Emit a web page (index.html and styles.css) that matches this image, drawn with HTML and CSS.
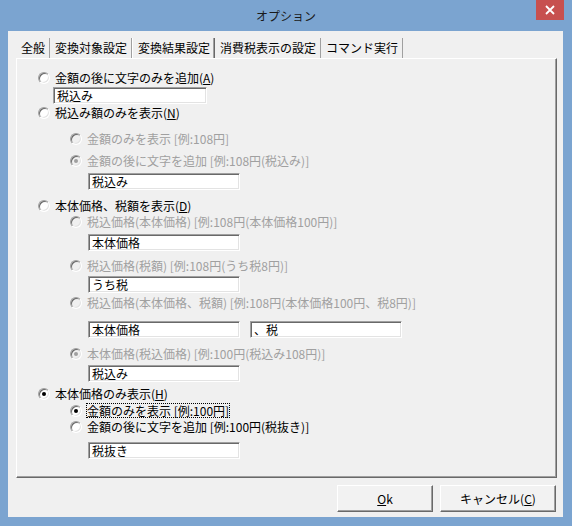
FILE: index.html
```html
<!DOCTYPE html>
<html lang="ja">
<head>
<meta charset="utf-8">
<title>オプション</title>
<link rel="stylesheet" href="styles.css">
</head>
<body>
<div class="window">
  <div class="titlebar">
    <span></span>
    <span class="title">オプション</span>
    <span class="close">
      <svg width="10" height="10" viewBox="0 0 10 10"><path d="M1 1L9 9M9 1L1 9" stroke="#fff" stroke-width="1.8" fill="none"/></svg>
    </span>
  </div>
  <div class="client">
    <div class="tabs">
      <div class="tab">全般</div>
      <div class="tab">変換対象設定</div>
      <div class="tab active">変換結果設定</div>
      <div class="tab">消費税表示の設定</div>
      <div class="tab">コマンド実行</div>
    </div>
    <div class="panel">
      <div class="row main"><span class="radio"></span>金額の後に文字のみを追加(<span class="u">A</span>)</div>
      <div class="field-row first m3"><div class="field">税込み</div></div>

      <div class="row main m2"><span class="radio"></span>税込み額のみを表示(<span class="u">N</span>)</div>
      <div class="row sub disabled m13"><span class="radio"></span>金額のみを表示 [例:108円]</div>
      <div class="row sub disabled m9"><span class="radio checked"></span>金額の後に文字を追加 [例:108円(税込み)]</div>
      <div class="field-row m6"><div class="field">税込み</div></div>

      <div class="row main m9"><span class="radio"></span>本体価格、税額を表示(<span class="u">D</span>)</div>
      <div class="row sub disabled m3"><span class="radio"></span>税込価格(本体価格) [例:108円(本体価格100円)]</div>
      <div class="field-row m6"><div class="field">本体価格</div></div>
      <div class="row sub disabled m8"><span class="radio"></span>税込価格(税額) [例:108円(うち税8円)]</div>
      <div class="field-row m4"><div class="field">うち税</div></div>
      <div class="row sub disabled m3"><span class="radio"></span>税込価格(本体価格、税額) [例:108円(本体価格100円、税8円)]</div>
      <div class="field-row m12"><div class="field">本体価格</div><div class="field">、税</div></div>
      <div class="row sub disabled m9"><span class="radio checked"></span>本体価格(税込価格) [例:100円(税込み108円)]</div>
      <div class="field-row m5"><div class="field">税込み</div></div>

      <div class="row main m5"><span class="radio checked"></span>本体価格のみ表示(<span class="u">H</span>)</div>
      <div class="row sub m4"><span class="radio checked"></span><span class="focus">金額のみを表示 [例:100円]</span></div>
      <div class="row sub m3"><span class="radio"></span>金額の後に文字を追加 [例:100円(税抜き)]</div>
      <div class="field-row m9"><div class="field">税抜き</div></div>
    </div>
    <div class="buttons">
      <div class="btn ok"><span class="u">O</span>k</div>
      <div class="btn cancel">キャンセル(<span class="u">C</span>)</div>
    </div>
  </div>
</div>
</body>
</html>
```

FILE: styles.css
```css
html, body {
  margin: 0;
  padding: 0;
  background: #7ba4d0;
}

body {
  font-family: "Noto Sans CJK JP", "Noto Sans", sans-serif;
  font-size: 12px;
  color: #000;
}

.window {
  width: 572px;
  height: 526px;
  background: #7ba4d0;
  display: flex;
  flex-direction: column;
  box-sizing: border-box;
}

.titlebar {
  height: 31px;
  flex: none;
  display: grid;
  grid-template-columns: 1fr auto 1fr;
  align-items: center;
}

.title {
  font-size: 12px;
  line-height: 31px;
  color: #1a1a1a;
}

.close {
  justify-self: end;
  align-self: start;
  margin-right: 8px;
  width: 28px;
  height: 20px;
  background: #c7504f;
  display: flex;
  align-items: center;
  justify-content: center;
}

.client {
  margin: 0 9px 9px 8px;
  flex: 1;
  background: #f0f0f0;
  display: flex;
  flex-direction: column;
}

.tabs {
  display: flex;
  height: 20px;
  margin: 7px 0 0 8px;
}

.tab {
  padding: 0 4px 0 5px;
  line-height: 20px;
  white-space: nowrap;
  border-right: 1px solid #a0a0a0;
}

.tab.active {
  border-left: 1px solid #fff;
  border-right: 1px solid #696969;
  box-shadow: inset -1px 0 #a0a0a0;
}

.panel {
  margin-left: 8px;
  width: 541px;
  height: 420px;
  box-sizing: border-box;
  border: 1px solid;
  border-color: #fff #696969 #696969 #fff;
  box-shadow: inset -1px -1px #a0a0a0;
  padding-top: 12px;
}

.row {
  display: flex;
  align-items: center;
  height: 13px;
  line-height: 13px;
  white-space: nowrap;
}

.row.main { padding-left: 21px; }
.row.sub { padding-left: 53px; }

.disabled { color: #a0a0a0; }

.radio {
  flex: none;
  position: relative;
  width: 12px;
  height: 12px;
  box-sizing: border-box;
  border-radius: 50%;
  margin-right: 5px;
  border: 1px solid;
  border-color: #a0a0a0 #fff #fff #a0a0a0;
  box-shadow: inset 1px 1px #696969, inset -1px -1px #e3e3e3;
  background: #fff;
}

.disabled .radio { background: #f0f0f0; }

.radio.checked::after {
  content: "";
  position: absolute;
  left: 3px;
  top: 3px;
  width: 4px;
  height: 4px;
  border-radius: 50%;
  background: #000;
}

.disabled .radio.checked::after { background: #a0a0a0; }

.focus {
  outline: 1px dotted #000;
  outline-offset: 0;
}

.u { text-decoration: underline; }

.field-row {
  display: flex;
  gap: 10px;
  margin-left: 71px;
}

.field-row.first { margin-left: 36px; }

.field {
  width: 152px;
  height: 17px;
  box-sizing: border-box;
  border: 1px solid;
  border-color: #a0a0a0 #fff #fff #a0a0a0;
  box-shadow: inset 1px 1px #696969, inset -1px -1px #e3e3e3;
  background: #fff;
  padding: 0 3px;
  line-height: 15px;
  color: #000;
  white-space: nowrap;
}

.field-row.first .field { width: 154px; }

.m0 { margin-top: 0; }
.m2 { margin-top: 2px; }
.m3 { margin-top: 3px; }
.m4 { margin-top: 4px; }
.m5 { margin-top: 5px; }
.m6 { margin-top: 6px; }
.m8 { margin-top: 8px; }
.m9 { margin-top: 9px; }
.m12 { margin-top: 12px; }
.m13 { margin-top: 13px; }

.buttons {
  display: flex;
  justify-content: flex-end;
  gap: 7px;
  margin-top: 7px;
  padding-right: 7px;
  height: 27px;
}

.btn {
  height: 27px;
  box-sizing: border-box;
  border: 1px solid;
  border-color: #fff #696969 #696969 #fff;
  box-shadow: inset -1px -1px #a0a0a0;
  background: #f2f2f2;
  display: flex;
  align-items: center;
  justify-content: center;
  white-space: nowrap;
}

.btn.ok { width: 96px; }
.btn.cancel { width: 116px; }
```
